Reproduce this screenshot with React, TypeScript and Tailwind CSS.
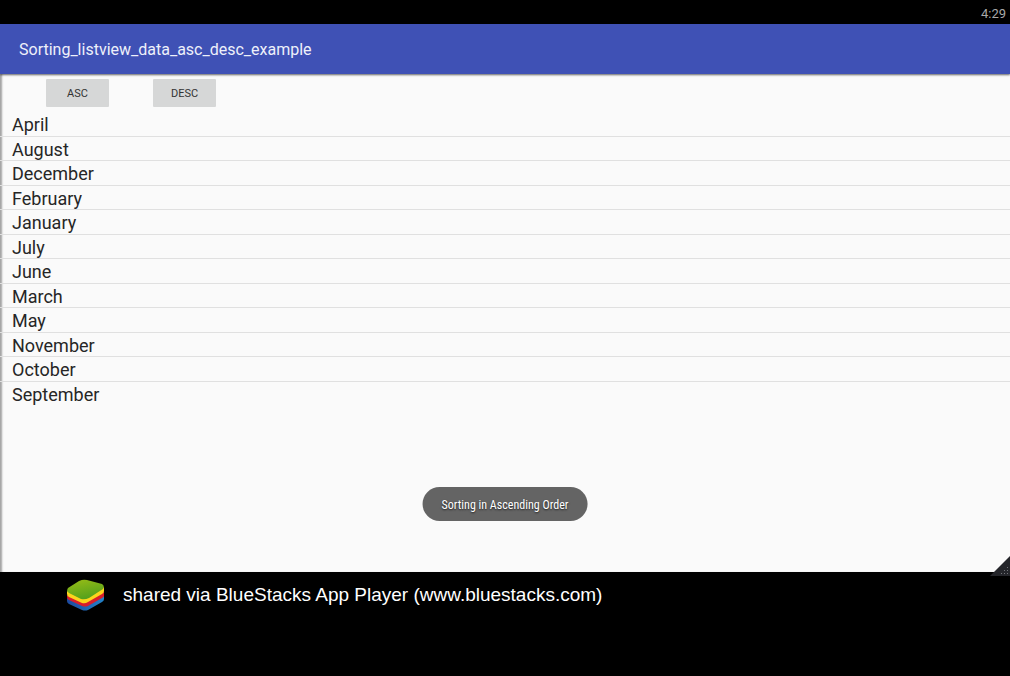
import { useState } from "react";

const MONTHS = [
  "April",
  "August",
  "December",
  "February",
  "January",
  "July",
  "June",
  "March",
  "May",
  "November",
  "October",
  "September",
];

function StatusBar() {
  return (
    <div className="flex h-6 items-end justify-end bg-black px-1 text-[13px] leading-5 text-[#a8a8a8]">
      <time>4:29</time>
    </div>
  );
}

function AppBar() {
  return (
    <header className="relative z-10 flex h-[50px] items-center bg-[#3f51b5] px-[19px] pt-0.5 shadow-[0_1px_2px_rgba(0,0,0,0.6)]">
      <h1 className="text-base text-[#eef0fa]">Sorting_listview_data_asc_desc_example</h1>
    </header>
  );
}

function SortButton({ label, onClick }: { label: string; onClick: () => void }) {
  return (
    <button
      type="button"
      onClick={onClick}
      className="h-7 w-[63px] rounded-[1px] bg-[#d6d7d7] pt-0.5 text-[11px] text-[#333333]"
    >
      {label}
    </button>
  );
}

function Toast({ message }: { message: string }) {
  return (
    <div
      role="status"
      className="absolute bottom-[51px] left-1/2 flex h-[34px] -translate-x-1/2 items-center rounded-full bg-[#646464] px-[19px] pt-0.5 font-['Roboto_Condensed','Liberation_Sans_Narrow',Roboto,sans-serif] text-xs whitespace-nowrap text-white [text-shadow:0_1px_2px_rgba(0,0,0,0.7)]"
    >
      {message}
    </div>
  );
}

function ResizeGrip() {
  return (
    <svg className="absolute right-0 -bottom-1 h-5 w-5" viewBox="0 0 20 20" aria-hidden="true">
      <path d="M20 0V20H0Z" fill="#24252a" />
      <path
        d="M17 11h1v1h-1zM14 14h1v1h-1zM17 14h1v1h-1zM11 17h1v1h-1zM14 17h1v1h-1zM17 17h1v1h-1z"
        fill="#74757a"
      />
    </svg>
  );
}

function Logo() {
  return (
    <svg className="h-8 w-[38px]" viewBox="0 0 38 32" aria-hidden="true">
      <defs>
        <linearGradient id="top" x1="0" y1="0" x2="0.4" y2="1">
          <stop offset="0" stopColor="#9abd16" />
          <stop offset="1" stopColor="#55a11c" />
        </linearGradient>
        <linearGradient id="base" x1="0" y1="0" x2="1" y2="0">
          <stop offset="0" stopColor="#1b4aa0" />
          <stop offset="1" stopColor="#2382c8" />
        </linearGradient>
      </defs>
      <path d="M1 19 18 25 38 15V20Q38 22 36 23L22 31Q19 32 16 31L3 25Q1 24 1 22Z" fill="url(#base)" />
      <path d="M1 16 18 22 38 12V17Q38 18 36 19L22 27Q19 28 16 27L3 21Q1 20 1 18Z" fill="#d81e2c" />
      <path d="M1 12 18 19 38 8V12Q38 14 36 15L22 23Q19 25 16 24L3 18Q1 17 1 15Z" fill="#fdd51c" />
      <path
        d="M13 2Q17 0 21 1L36 5Q39 7 37 10L23 19Q19 21 15 20L3 14Q0 12 2 9Z"
        fill="url(#top)"
      />
    </svg>
  );
}

export default function App() {
  const [descending, setDescending] = useState(false);
  const months = descending ? [...MONTHS].reverse() : MONTHS;

  return (
    <div className="flex min-h-screen flex-col bg-black font-[Roboto,sans-serif]">
      <StatusBar />
      <AppBar />
      <main className="relative flex-1 bg-[#fafafa] shadow-[inset_3px_0_2px_-1px_rgba(0,0,0,0.35)]">
        <div className="flex gap-11 px-[46px] pt-[5px]">
          <SortButton label="ASC" onClick={() => setDescending(false)} />
          <SortButton label="DESC" onClick={() => setDescending(true)} />
        </div>
        <ul className="mt-[5px] grid h-[294px] auto-rows-fr divide-y divide-[#e0e0e0] text-lg leading-[22px] text-[#262626]">
          {months.map((month) => (
            <li key={month} className="px-3 pt-0.5">
              {month}
            </li>
          ))}
        </ul>
        <Toast message={descending ? "Sorting in Descending Order" : "Sorting in Ascending Order"} />
        <ResizeGrip />
      </main>
      <footer className="flex h-[104px] items-start gap-[19px] px-[66px] pt-[7px] font-['Liberation_Sans',sans-serif] text-[19px] text-white">
        <Logo />
        <p className="leading-8">shared via BlueStacks App Player (www.bluestacks.com)</p>
      </footer>
    </div>
  );
}
